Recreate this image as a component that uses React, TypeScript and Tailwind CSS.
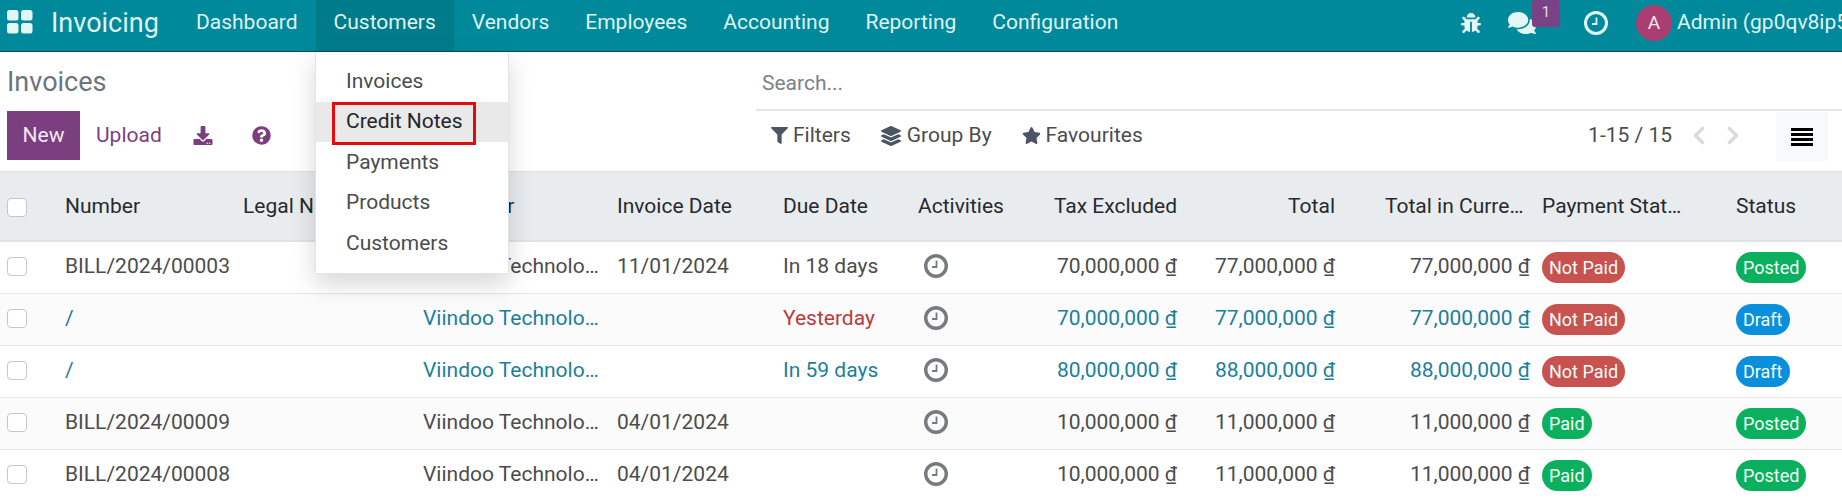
import { FaBug, FaComments, FaDownload, FaQuestionCircle, FaFilter, FaLayerGroup, FaStar, FaChevronLeft, FaChevronRight } from 'react-icons/fa';

const NAV = ['Dashboard', 'Customers', 'Vendors', 'Employees', 'Accounting', 'Reporting', 'Configuration'];
const MENU = ['Invoices', 'Credit Notes', 'Payments', 'Products', 'Customers'];
const COLS = 'grid grid-cols-[55px_178px_180px_194px_166px_135px_122px_157px_158px_187px_194px_1fr]';

type Row = {
  number: string;
  date: string;
  due: string;
  dueTone?: 'late' | 'soon';
  tax: string;
  total: string;
  pay: 'Not Paid' | 'Paid';
  status: 'Posted' | 'Draft';
  link?: boolean;
};

const ROWS: Row[] = [
  { number: 'BILL/2024/00003', date: '11/01/2024', due: 'In 18 days', tax: '70,000,000', total: '77,000,000', pay: 'Not Paid', status: 'Posted' },
  { number: '/', date: '', due: 'Yesterday', dueTone: 'late', tax: '70,000,000', total: '77,000,000', pay: 'Not Paid', status: 'Draft', link: true },
  { number: '/', date: '', due: 'In 59 days', dueTone: 'soon', tax: '80,000,000', total: '88,000,000', pay: 'Not Paid', status: 'Draft', link: true },
  { number: 'BILL/2024/00009', date: '04/01/2024', due: '', tax: '10,000,000', total: '11,000,000', pay: 'Paid', status: 'Posted' },
  { number: 'BILL/2024/00008', date: '04/01/2024', due: '', tax: '10,000,000', total: '11,000,000', pay: 'Paid', status: 'Posted' },
];

function ClockIcon({ size, stroke, color }: { size: number; stroke: number; color: string }) {
  return (
    <svg width={size} height={size} viewBox="0 0 24 24" fill="none" stroke={color} strokeLinecap="butt">
      <circle cx="12" cy="12" r={12 - stroke / 2} strokeWidth={stroke} />
      <path d="M12.5 6.5v6.5H8" strokeWidth={1.8} />
    </svg>
  );
}

function AppsIcon() {
  return (
    <svg className="mb-[3px]" width="26" height="24" viewBox="0 0 26 24" fill="#e3f6f6">
      <rect x="0" y="0" width="11.5" height="10.5" rx="2.5" />
      <rect x="14" y="0" width="11.5" height="10.5" rx="2.5" />
      <rect x="0" y="13" width="11.5" height="10.5" rx="2.5" />
      <rect x="14" y="13" width="11.5" height="10.5" rx="2.5" />
    </svg>
  );
}

function Amount({ value }: { value: string }) {
  return (
    <span>
      {value} <span className="underline">₫</span>
    </span>
  );
}

function Badge({ label }: { label: string }) {
  const tone = label === 'Not Paid' ? 'bg-[#c85250]' : label === 'Draft' ? 'bg-[#0a8fdc]' : 'bg-[#0bb05e]';
  return <span className={`inline-flex h-[31px] items-center rounded-full px-[7px] text-[18px] text-[#f2fff8] ${tone}`}>{label}</span>;
}

function Checkbox() {
  return <span className="ml-[7px] block h-[19px] w-[20px] rounded-[4px] border border-[#c4c7ca] bg-white" />;
}

export default function App() {
  return (
    <div className="relative h-[501px] w-full overflow-hidden bg-white font-['Roboto',sans-serif] text-[21px] text-[#4c4c4c]">
      <header className="flex h-[52px] border-b border-[#01505c] bg-[#00899a] pl-[7px] text-[#dff4f4]">
        <div className="flex items-center pb-[5px]">
          <AppsIcon />
          <span className="ml-[18px] w-[127px] text-[27px] leading-none">Invoicing</span>
        </div>
        <nav className="flex h-full">
          {NAV.map((item) => (
            <span key={item} className={`flex items-center px-[18px] pb-[6px] ${item === 'Customers' ? 'bg-[#007b8a]' : ''}`}>
              {item}
            </span>
          ))}
        </nav>
        <div className="ml-auto flex h-full min-w-0 items-center pb-[5px]">
          <FaBug className="h-[20px] w-[20px] text-[#e3f6f6]" />
          <span className="relative ml-[27px]">
            <FaComments className="h-[26px] w-[28px] text-[#e3f6f6]" />
            <span className="absolute bottom-[9px] left-[24px] flex h-[27px] w-[28px] items-start justify-center rounded-[3px] bg-[#7a4284] pt-[3px] text-[15px] leading-[18px] text-[#e8dcec]">1</span>
          </span>
          <span className="ml-[48px]">
            <ClockIcon size={24} stroke={3} color="#e3f6f6" />
          </span>
          <span className="ml-[28px] flex h-[36px] w-[36px] items-center justify-center rounded-full bg-[#a83f70] text-[19px] text-[#f7e8ef]">A</span>
          <span className="ml-[5px] w-[165px] overflow-hidden whitespace-nowrap">Admin (gp0qv8ip5xyz)</span>
        </div>
      </header>

      <section className="flex h-[120px] border-b border-[#dee2e6]">
        <div className="w-[756px] pl-[7px]">
          <h1 className="mt-[14px] text-[27px] leading-[32px] text-[#6c757d]">Invoices</h1>
          <div className="mt-[13px] flex items-center">
            <button className="h-[49px] w-[73px] bg-[#7b3f80] text-[#f3e9f5]">New</button>
            <span className="ml-[16px] text-[#7b3f80]">Upload</span>
            <FaDownload className="ml-[31px] h-[19px] w-[20px] text-[#7b3f80]" />
            <FaQuestionCircle className="ml-[39px] h-[19px] w-[19px] text-[#7b3f80]" />
          </div>
        </div>
        <div className="min-w-0 flex-1">
          <div className="flex h-[59px] items-center border-b-2 border-[#e4e6e8] pl-[6px] pt-[6px] text-[#7a8288]">Search...</div>
          <div className="flex h-[49px] items-center pl-[15px]">
            <FaFilter className="h-[17px] w-[17px] text-[#4b5563]" />
            <span className="ml-[5px]">Filters</span>
            <FaLayerGroup className="ml-[30px] h-[20px] w-[20px] text-[#4b5563]" />
            <span className="ml-[6px]">Group By</span>
            <FaStar className="ml-[30px] h-[19px] w-[19px] text-[#4b5563]" />
            <span className="ml-[5px]">Favourites</span>
            <span className="ml-auto">1-15 / 15</span>
            <FaChevronLeft className="ml-[20px] h-[21px] w-[14px] text-[#d8dadc]" />
            <FaChevronRight className="ml-[20px] h-[21px] w-[14px] text-[#d8dadc]" />
            <span className="ml-[36px] mr-[14px] mt-[2px] flex h-[49px] w-[52px] flex-col items-center justify-center gap-[2px] bg-[#f8f9fa]">
              <span className="h-[3px] w-[22px] bg-black" />
              <span className="h-[3px] w-[22px] bg-black" />
              <span className="h-[3px] w-[22px] bg-black" />
              <span className="h-[3px] w-[22px] bg-black" />
            </span>
          </div>
        </div>
      </section>

      <div className={`${COLS} h-[70px] items-center border-b-2 border-[#dee2e6] bg-[#e9ecef] pt-[2px] text-[#262a2e]`}>
        <Checkbox />
        <span className="pl-[10px]">Number</span>
        <span className="pl-[10px]">Legal Number</span>
        <span className="pl-[10px]">Customer</span>
        <span className="pl-[10px]">Invoice Date</span>
        <span className="pl-[10px]">Due Date</span>
        <span className="pl-[10px]">Activities</span>
        <span className="pr-[10px] text-right">Tax Excluded</span>
        <span className="pr-[10px] text-right">Total</span>
        <span className="truncate pl-[40px] pr-[6px] text-left">Total in Currency Signed</span>
        <span className="truncate pl-[10px] pr-[40px]">Payment Status</span>
        <span className="pl-[10px]">Status</span>
      </div>

      {ROWS.map((row, i) => (
        <div
          key={i}
          className={`${COLS} h-[52px] items-center border-b border-[#e4e6e8] pb-[2px] ${i % 2 ? 'bg-[#fbfbfb]' : 'bg-white'} ${row.link ? 'text-[#1b7f9c]' : ''}`}
        >
          <Checkbox />
          <span className="pl-[10px]">{row.number}</span>
          <span />
          <span className="truncate pl-[10px] pr-[6px]">Viindoo Technology Joint Stock</span>
          <span className="pl-[10px]">{row.date}</span>
          <span className={`pl-[10px] ${row.dueTone === 'late' ? 'text-[#b83c3c]' : ''}`}>{row.due}</span>
          <span className="mb-[2px] pl-[16px]">
            <ClockIcon size={24} stroke={3.4} color="#777b7f" />
          </span>
          <span className="pr-[10px] text-right"><Amount value={row.tax} /></span>
          <span className="pr-[10px] text-right"><Amount value={row.total} /></span>
          <span className="pr-[2px] text-right"><Amount value={row.total} /></span>
          <span className="mt-[2px] pl-[10px]"><Badge label={row.pay} /></span>
          <span className="mt-[2px] pl-[10px]"><Badge label={row.status} /></span>
        </div>
      ))}

      <div className="absolute left-[315px] top-[52px] h-[222px] w-[194px] border border-t-0 border-[#e2e4e6] bg-white pt-[9px] shadow-[0_10px_24px_rgba(0,0,0,0.16)]">
        {MENU.map((item) => (
          <div key={item} className={`relative flex h-[40.6px] items-center pl-[30px] ${item === 'Credit Notes' ? 'bg-[#e9e9e9] text-[#22262a]' : ''}`}>
            {item}
            {item === 'Credit Notes' && <span className="absolute left-[16px] top-0 h-[43px] w-[144px] border-[3px] border-[#e20c0c]" />}
          </div>
        ))}
      </div>
    </div>
  );
}
